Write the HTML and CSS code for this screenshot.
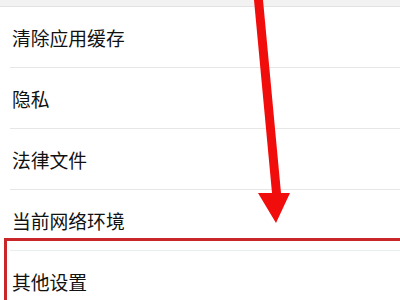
FILE: index.html
```html
<!DOCTYPE html>
<html lang="zh-CN">
<head>
  <meta charset="UTF-8">
  <meta name="viewport" content="width=device-width, initial-scale=1">
  <title>设置</title>
  <link rel="stylesheet" href="styles.css">
</head>
<body>
  <div class="page">
    <div class="topbar"></div>

    <ul class="menu">
      <li>清除应用缓存</li>
      <li>隐私</li>
      <li>法律文件</li>
      <li>当前网络环境</li>
      <li>其他设置</li>
    </ul>

    <!-- 标注：红框和箭头 -->
    <div class="highlight"></div>
    <svg class="arrow" width="400" height="300" viewBox="0 0 400 300">
      <polygon points="254,0 263,0 281,193 290,193 276,223 258,193 272,193" fill="#f20d0d"/>
    </svg>
  </div>
</body>
</html>
```

FILE: styles.css
```css
body {
  margin: 0;
  background-color: #fff;
  font-family: "Noto Sans CJK SC", "Noto Sans", sans-serif;
  color: #111;
}

.page {
  position: relative;
  width: 400px;
  height: 300px;
  overflow: hidden;
}

.topbar {
  height: 6px;
  background-color: #f2f2f2;
  border-bottom: 1px solid #e2e2e2;
}

.menu {
  list-style: none;
  margin: 0;
  padding: 0 0 0 10px;
}

.menu li {
  height: 61px;
  display: flex;
  align-items: center;
  padding: 3px 0 0 2px;
  box-sizing: border-box;
  border-bottom: 1px solid #e6e6e6;
  font-size: 18.8px;
  line-height: 1;
}

.menu li:last-child {
  border-bottom: none;
  border-top: 1px solid #e6eeee;
  margin-top: -1px;
}

.highlight {
  position: absolute;
  left: 4px;
  top: 238px;
  width: 420px;
  height: 100px;
  border: 3px solid #c9262a;
}

.arrow {
  position: absolute;
  left: 0;
  top: 0;
}
```
